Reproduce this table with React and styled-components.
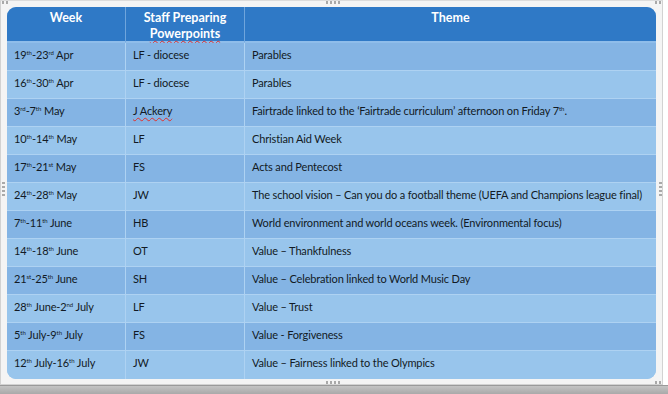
import React from 'react';
import styled, { createGlobalStyle } from 'styled-components';

const GlobalStyle = createGlobalStyle`
  html, body {
    margin: 0;
    padding: 0;
    background: #ffffff;
  }
  * {
    box-sizing: border-box;
  }
`;

const Page = styled.div`
  width: 668px;
  height: 394px;
  display: flex;
  flex-direction: column;
  overflow: hidden;
`;

// dotted resize grips of the selection frame, painted as background layers
const dotsX = 'repeating-linear-gradient(90deg, #a9a9a9 0 2px, transparent 2px 4px)';
const dotsY = 'repeating-linear-gradient(180deg, #a9a9a9 0 2px, transparent 2px 4px)';

const Frame = styled.div`
  width: 663px;
  height: 385px;
  padding: 6px 6px 5px 6px;
  border: 1px solid #d2d2d2;
  border-top-color: #dcdcdc;
  background:
    ${dotsX} 1px 0 / 6px 3px no-repeat,
    ${dotsX} 325px 0 / 15px 3px no-repeat,
    ${dotsX} 654px 0 / 6px 3px no-repeat,
    ${dotsY} 1px 181px / 3px 15px no-repeat,
    ${dotsY} 658px 181px / 3px 15px no-repeat,
    ${dotsX} 325px 380px / 15px 3px no-repeat,
    ${dotsX} 654px 380px / 6px 3px no-repeat,
    #f4f4f4;
`;

const BottomBar = styled.div`
  height: 9px;
  background: linear-gradient(#c4c4c4, #a9a9a9);
  border-top: 1px solid #9a9a9a;
`;

const Table = styled.div`
  display: grid;
  grid-template-columns: 119px 119px 1fr;
  grid-template-rows: 36px repeat(12, 28px);
  width: 649px;
  border-radius: 9px;
  overflow: hidden;
  background: #98c4ec;
  font-family: Lato, 'Open Sans', sans-serif;
  color: #121a24;
`;

const HeadCell = styled.div`
  background: #2f79c6;
  color: #ffffff;
  font-weight: 700;
  font-size: 12.5px;
  line-height: 16px;
  text-align: center;
  padding-top: 3px;
  border-right: ${p => (p.$last ? 'none' : '1px solid #6fa5dc')};
  border-bottom: 2px solid #8fbdea;
`;

const Cell = styled.div`
  background: ${p => (p.$dark ? '#84b4e4' : '#98c5ec')};
  font-size: 11px;
  line-height: 14px;
  padding: 5px 0 0 7px;
  white-space: nowrap;
  letter-spacing: -0.15px;
  border-right: ${p => (p.$last ? 'none' : '1.5px solid #aed2f2')};
  border-bottom: ${p => (p.$end ? 'none' : '1.5px solid #aed2f2')};
`;

const Sup = styled.sup`
  font-size: 6px;
  line-height: 0;
  vertical-align: 4px;
  letter-spacing: 0;
`;

const Squiggle = styled.span`
  text-decoration: underline wavy #e0302c;
  text-decoration-thickness: 1px;
  text-underline-offset: 2px;
`;

const rows = [
  ['19^th-23^rd Apr', 'LF - diocese', 'Parables'],
  ['16^th-30^th Apr', 'LF - diocese', 'Parables'],
  ['3^rd-7^th  May', '~J Ackery', 'Fairtrade linked to the ‘Fairtrade curriculum’ afternoon on Friday 7^th.'],
  ['10^th-14^th May', 'LF', 'Christian Aid Week'],
  ['17^th-21^st May', 'FS', 'Acts and Pentecost'],
  ['24^th-28^th May', 'JW', 'The school vision – Can you do a football theme (UEFA and Champions league final)'],
  ['7^th-11^th June', 'HB', 'World environment and world oceans week. (Environmental focus)'],
  ['14^th-18^th June', 'OT', 'Value – Thankfulness'],
  ['21^st-25^th June', 'SH', 'Value – Celebration linked to World Music Day'],
  ['28^th June-2^nd July', 'LF', 'Value –  Trust'],
  ['5^th July-9^th July', 'FS', 'Value - Forgiveness'],
  ['12^th July-16^th July', 'JW', 'Value – Fairness linked to the Olympics'],
];

// "19^th-23^rd" -> 19<sup>th</sup>-23<sup>rd</sup>, leading ~ marks a spelling squiggle
function renderText(text) {
  if (text.startsWith('~')) return <Squiggle>{text.slice(1)}</Squiggle>;
  const parts = text.split(/\^([a-z]{2})/);
  return parts.map((part, i) =>
    i % 2 === 1 ? <Sup key={i}>{part}</Sup> : <React.Fragment key={i}>{part}</React.Fragment>
  );
}

export default function App() {
  return (
    <Page>
      <GlobalStyle />
      <Frame>
        <Table>
          <HeadCell>Week</HeadCell>
          <HeadCell>
            Staff Preparing
            <br />
            <Squiggle>Powerpoints</Squiggle>
          </HeadCell>
          <HeadCell $last>Theme</HeadCell>
          {rows.map((row, r) =>
            row.map((text, c) => (
              <Cell key={`${r}-${c}`} $dark={r % 2 === 0} $last={c === 2} $end={r === rows.length - 1}>
                {renderText(text)}
              </Cell>
            ))
          )}
        </Table>
      </Frame>
      <BottomBar />
    </Page>
  );
}
